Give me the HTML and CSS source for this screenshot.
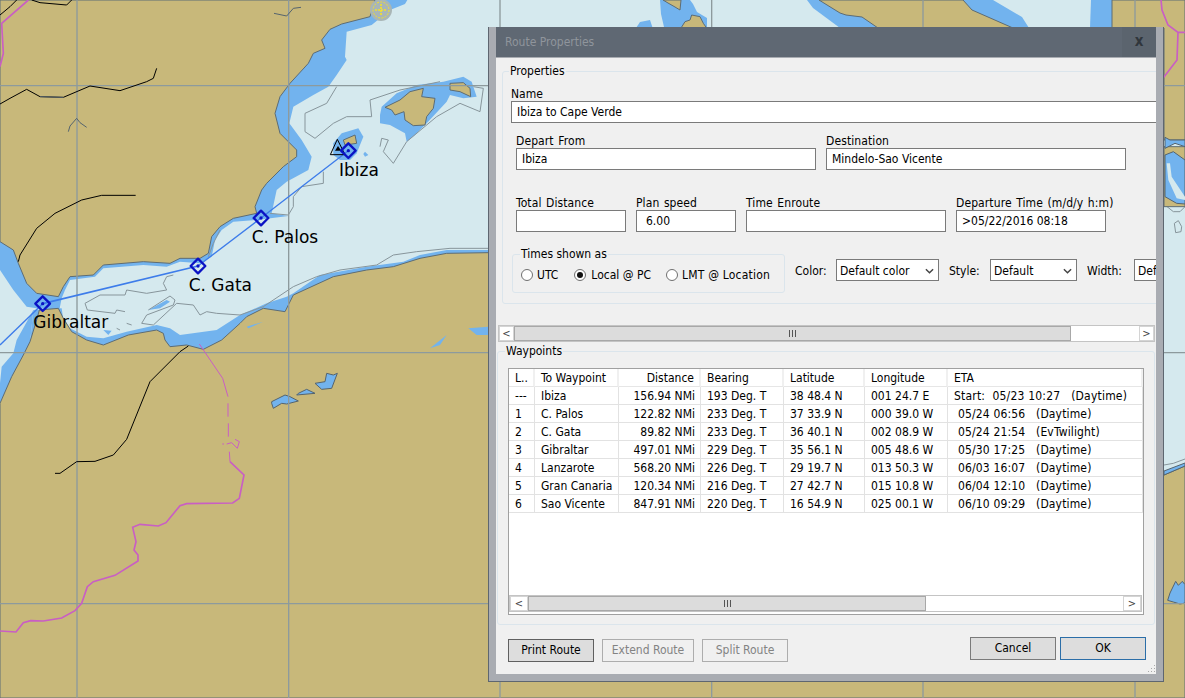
FILE: index.html
```html
<!DOCTYPE html>
<html lang="en">

<head>
    <meta charset="UTF-8">
    <title>Route Properties</title>
    <link rel="stylesheet" href="styles.css">
</head>

<body>
    <!-- chart, drawn in 3x units -->
    <svg class="chart" viewBox="0 0 3555 2094" width="1185" height="698">
        <rect class="water" x="0" y="0" width="3555" height="2094" />

        <!-- shallow bands -->
        <path class="shoal" d="M1222 0 L1215 12 L1170 30 L1115 75 L1040 95 L1035 170 L1040 180 L1010 225 L985 260 L940 285 L880 320 L868 370 L905 420 L935 470 L925 510 L860 545 L830 570 L815 640 L865 648 L770 660 L700 665 L665 690 L645 720 L635 770 L600 790 L540 785 L500 800 L430 795 L310 805 L285 830 L210 840 L195 870 L185 895 L178 930 L110 925 L80 920 L40 870 L0 810 L0 700 L300 0 Z" />
        <path class="shoal" d="M100 930 L185 925 L190 960 L210 985 L260 1010 L310 1015 L380 995 L470 975 L510 985 L540 1005 L650 990 L720 945 L800 910 L860 890 L880 880 L960 825 L1100 800 L1210 785 L1260 765 L1340 750 L1465 750 L1465 1100 L90 1100 L90 1030 Z" />
        <path class="shoal" d="M100 930 L50 1020 L40 1060 L5 1100 L0 1150 L0 1210 L90 1030 Z" />
        <path class="shoal" d="M1140 345 L1145 320 L1190 280 L1250 255 L1330 245 L1390 230 L1415 245 L1430 290 L1390 295 L1350 285 L1340 305 L1280 370 L1245 405 L1220 425 L1215 400 L1170 375 L1140 370 Z" />
        <path class="shoal" d="M1000 430 L1025 400 L1075 385 L1090 410 L1070 460 L1050 480 L1020 480 L1000 465 Z" />
        <path class="shoal" d="M1095 455 L1105 465 L1095 470 L1090 462 Z" />
        <path class="shoal" d="M1980 0 L1983 42 L1992 81 L1968 84 L2121 84 L2121 54 L2091 36 L2079 12 L2070 0 Z" />
        <path class="shoal" d="M1908 84 L1920 66 L1950 60 L1958 84 Z" />
        <path class="shoal" d="M2421 0 L2439 24 L2520 84 L2640 84 L2619 39 L2586 0 Z" />
        <path class="shoal" d="M2889 0 L2979 0 L3030 30 L3066 51 L3087 84 L2889 84 Z" />
        <path class="shoal" d="M3273 0 L3336 0 L3342 39 L3336 84 L3270 84 Z" />
        <path class="shoal" d="M445 930 L500 900 L510 905 L480 925 Z M310 990 L335 992 L325 1005 Z" />

        <!-- contours -->
        <path class="contour" d="M1010 260 L980 310 L915 340 L915 395 L945 415 L1000 370 L1040 350 L1115 350 L1110 300 L1200 270 L1320 245" />
        <path class="contour" d="M1420 260 L1450 265 L1440 335 L1380 310 L1310 350 L1220 425 L1180 490 L1150 455 L1165 420 L1145 415 L1140 440" />
        <path class="contour" d="M970 515 L970 550 L905 560 L880 590 L880 620 L865 645 L810 640" />
        <path class="contour" d="M1465 745 L1350 745 L1250 755 L1180 765 L1130 795 L1020 810 L950 830 L880 860 L790 920 L720 945 L650 940 L620 935 L600 945 L580 915 L530 910" />
        <path class="contour" d="M530 910 L460 975 L425 970 L440 945 L520 915 L525 900 L510 888 L445 930" />
        <path class="contour" d="M490 850 L500 830 L520 825 M490 850 L500 870 L440 880 L380 870 L375 885 L300 885 L255 910 L262 930 L345 940 L350 930 L375 935" />
        <path class="contour" d="M660 690 L640 730 L625 770 M350 985 L360 990 M380 970 L395 975" />
        <path class="contour" d="M3495 615 L3520 635 L3540 635 L3555 620" />
        <path class="contour" d="M3523 670 L3535 662 L3545 680 L3543 695 L3527 698 Z" />
        <path class="contour" d="M3492 1395 L3520 1390 L3555 1377" />

        <!-- land -->
        <path class="land" d="M0 0 L1125 0 L1110 50 L1025 72 L990 88 L965 120 L975 145 L940 160 L925 190 L870 250 L840 290 L825 340 L840 400 L890 450 L890 470 L850 500 L800 550 L785 570 L765 620 L770 640 L700 655 L660 680 L635 710 L625 760 L600 775 L540 775 L510 790 L430 785 L310 795 L280 825 L210 830 L190 860 L175 890 L110 880 L80 850 L55 790 L40 750 L0 725 Z" />
        <path class="land" d="M90 1025 L110 960 L118 930 L175 925 L190 955 L215 995 L260 1020 L310 1035 L385 1005 L470 990 L490 1000 L495 1020 L510 1040 L560 1035 L610 1048 L665 1020 L720 970 L740 950 L790 925 L855 935 L880 885 L1000 830 L1100 810 L1180 800 L1260 775 L1340 760 L1465 758 L3492 1425 L3555 1398 L3555 2094 L0 2094 L0 1210 L35 1130 L70 1065 Z" />
        <path class="land" d="M1155 322 L1200 300 L1230 275 L1270 265 L1265 290 L1305 295 L1300 325 L1280 350 L1275 375 L1240 377 L1215 360 L1212 335 L1185 345 L1175 330 Z" />
        <path class="land" d="M1350 250 L1390 248 L1410 265 L1412 290 L1380 275 L1350 270 Z" />
        <path class="land" d="M1030 420 L1065 405 L1070 430 L1035 435 Z" />
        <path class="land" d="M1989 0 L2043 0 L2040 30 L2025 21 L2004 9 Z" />
        <path class="land" d="M2043 84 L2055 65 L2070 60 L2075 45 L2100 50 L2110 70 L2120 84 Z" />
        <path class="land" d="M2457 0 L2520 39 L2538 45 L2586 51 L2634 84 L3039 84 L2916 30 L2889 0 Z" />
        <path class="land" d="M3336 0 L3555 0 L3555 420 L3492 420 L3492 84 L3336 84 Z" />
        <path class="land" d="M3492 440 L3555 440 L3555 620 L3492 620 Z" />

        <!-- right edge shoals and lakes -->
        <path class="shoal-edge" d="M3495 412 L3510 420 L3555 420 L3555 440 L3525 430 L3495 445 Z" />
        <path class="shoal-edge" d="M3495 465 L3520 455 L3555 480 L3555 612 L3530 610 L3495 590 Z" />
        <path class="light" d="M3500 490 L3510 490 L3515 530 L3555 590 L3555 600 L3530 595 L3505 540 Z" />
        <path class="shoal-edge" d="M3492 1413 L3555 1389 L3555 1398 L3492 1425 Z" />
        <path class="shoal-edge" d="M3503 1801 L3510 1779 L3527 1744 L3535 1756 L3547 1744 L3555 1754 L3555 1809 L3540 1812 L3520 1806 Z" />
        <path class="shoal" d="M740 980 L790 965 L745 985 Z M1405 985 L1465 980 L1465 1005 L1430 1005 Z M1290 1045 L1340 1005 L1320 1035 Z" />
        <path class="shoal-edge" d="M815 1210 L820 1225 L845 1210 L860 1212 L895 1203 L870 1190 L855 1185 L815 1205 Z" />
        <path class="shoal-edge" d="M890 1185 L945 1180 L920 1168 L895 1180 Z" />
        <path class="shoal-edge" d="M945 1150 L965 1168 L995 1165 L1012 1120 L1000 1125 L980 1120 L975 1145 Z" />

        <!-- grid -->
        <path class="grid" d="M231 0 V2094 M866 0 V2094 M1500 0 V2094 M2135 0 V2094 M2769 0 V2094 M3405 0 V2094 M0 257 H3555 M0 1058 H3555 M0 1811 H3555" />

        <!-- coast tracks -->
        <path class="track" d="M0 45 L30 20 L50 0 M95 0 L120 8 L200 15 L215 0" />
        <path class="track" d="M0 312 L30 295 L80 268 L120 290 L190 292 L270 258 L360 272 L440 245 L460 235 L470 205" />
        <path class="track" d="M407 586 L305 586 L245 600 L165 640 L110 685 L60 765 L55 785" />
        <path class="track" d="M165 1420 L180 1420 L230 1385 L285 1384 L340 1365 L380 1318 L450 1145 L540 1055 L565 1038" />
        <path class="stream" d="M822 40 L860 48 L880 25 L903 22 M205 395 L210 378 L230 355 L240 368 L260 382 M120 290 L190 292" />

        <!-- borders -->
        <path class="border" d="M85 0 L5 70 L10 160 L0 200" />
        <path class="border thin" d="M598 1032 L668 1135 L684 1190 M684 1210 V1250 M685 1270 V1310 M667 1332 H672 M680 1332 L695 1328 L712 1345 L718 1325 L705 1318 M688 1355 L690 1385" />
        <path class="border" d="M690 1385 L732 1425 L718 1495 L698 1509 L560 1511 L540 1517 L498 1568 L475 1578 L420 1573 L398 1582 L408 1625 L402 1650 L414 1665 L414 1683 L345 1726 L280 1745 L262 1760 L245 1810 L225 1832 L185 1854 L130 1863 L92 1862 L70 1868 L48 1896 L0 1893" />
        <path class="border" d="M3483 0 L3486 30 L3504 75 L3534 97 L3555 97 M3534 97 L3531 180 L3489 235" />

        <!-- lights -->
        <circle class="light-halo" cx="1143" cy="30" r="33" />
        <circle class="light-ring" cx="1143" cy="30" r="24" />
        <path class="light-cross" d="M1143 12 V48 M1125 30 H1161" />

        <!-- route -->
        <path class="route" d="M0 1035 L128 911" />
        <path class="route wide" d="M128 911 L594 798" />
        <path class="route" d="M594 798 L783 654 L1045 452" />

        <path class="beacon" d="M1012 418 L1035 464 L991 464 Z" />
        <path class="beacon-fill" d="M1014 438 L1024 452 L1005 452 Z" />

        <g class="wp">
            <path d="M128 889 L150 911 L128 933 L106 911 Z" />
            <circle cx="128" cy="911" r="5" />
            <path d="M594 776 L616 798 L594 820 L572 798 Z" />
            <circle cx="594" cy="798" r="5" />
            <path d="M783 632 L805 654 L783 676 L761 654 Z" />
            <circle cx="783" cy="654" r="5" />
            <path d="M1045 430 L1067 452 L1045 474 L1023 452 Z" />
            <circle cx="1045" cy="452" r="5" />
        </g>

        <text class="place" x="1017" y="527">Ibiza</text>
        <text class="place" x="755" y="728">C. Palos</text>
        <text class="place" x="566" y="873">C. Gata</text>
        <text class="place" x="100" y="985">Gibraltar</text>
    </svg>

    <div class="dialog">
        <div class="titlebar">
            <span class="title">Route Properties</span>
            <span class="close">x</span>
        </div>

        <div class="content">
            <div class="props">
                <fieldset class="group props-group">
                    <legend>Properties</legend>

                    <div class="label">Name</div>
                    <div class="box name-box">Ibiza to Cape Verde</div>

                    <div class="row row-places">
                        <div class="field w300">
                            <div class="label">Depart From</div>
                            <div class="box">Ibiza</div>
                        </div>
                        <div class="field w300">
                            <div class="label">Destination</div>
                            <div class="box">Mindelo-Sao Vicente</div>
                        </div>
                    </div>

                    <div class="row row-plan">
                        <div class="field w110">
                            <div class="label">Total Distance</div>
                            <div class="box"></div>
                        </div>
                        <div class="field w100">
                            <div class="label">Plan speed</div>
                            <div class="box speed">6.00</div>
                        </div>
                        <div class="field w200">
                            <div class="label">Time Enroute</div>
                            <div class="box"></div>
                        </div>
                        <div class="field w150">
                            <div class="label">Departure Time (m/d/y h:m)</div>
                            <div class="box">&gt;05/22/2016 08:18</div>
                        </div>
                    </div>

                    <div class="row-options">
                        <fieldset class="group times">
                            <legend>Times shown as</legend>
                            <div class="radios">
                                <span class="radio r-utc"><i class="dot"></i>UTC</span>
                                <span class="radio r-local"><i class="dot on"></i>Local @ PC</span>
                                <span class="radio r-lmt"><i class="dot"></i>LMT @ Location</span>
                            </div>
                        </fieldset>

                        <div class="selects">
                            <span class="sel-label color-label">Color:</span>
                            <div class="select w103">Default color<svg class="chev" viewBox="0 0 10 6"><path d="M1 1 L5 5 L9 1" /></svg></div>
                            <span class="sel-label style-label">Style:</span>
                            <div class="select w87">Default<svg class="chev" viewBox="0 0 10 6"><path d="M1 1 L5 5 L9 1" /></svg></div>
                            <span class="sel-label width-label">Width:</span>
                            <div class="select w87">Default</div>
                        </div>
                    </div>
                </fieldset>
            </div>

            <div class="hscroll top-scroll">
                <span class="arrow">&lt;</span>
                <span class="thumb thumb-top"><i class="grip"></i></span>
                <span class="track"></span>
                <span class="arrow">&gt;</span>
            </div>

            <fieldset class="group waypoints">
                <legend>Waypoints</legend>
                <div class="listbox">
                    <table class="wp-table">
                        <colgroup>
                            <col class="c-leg">
                            <col class="c-name">
                            <col class="c-dist">
                            <col class="c-bear">
                            <col class="c-lat">
                            <col class="c-lon">
                            <col class="c-eta">
                        </colgroup>
                        <thead>
                            <tr>
                                <th>L..</th>
                                <th>To Waypoint</th>
                                <th class="num">Distance</th>
                                <th>Bearing</th>
                                <th>Latitude</th>
                                <th>Longitude</th>
                                <th>ETA</th>
                            </tr>
                        </thead>
                        <tbody>
                            <tr><td>---</td><td>Ibiza</td><td class="num">156.94 NMi</td><td>193 Deg. T</td><td>38 48.4 N</td><td>001 24.7 E</td><td class="eta-first">Start:  05/23 10:27   (Daytime)</td></tr>
                            <tr><td>1</td><td>C. Palos</td><td class="num">122.82 NMi</td><td>233 Deg. T</td><td>37 33.9 N</td><td>000 39.0 W</td><td class="eta">05/24 06:56   (Daytime)</td></tr>
                            <tr><td>2</td><td>C. Gata</td><td class="num">89.82 NMi</td><td>233 Deg. T</td><td>36 40.1 N</td><td>002 08.9 W</td><td class="eta">05/24 21:54   (EvTwilight)</td></tr>
                            <tr><td>3</td><td>Gibraltar</td><td class="num">497.01 NMi</td><td>229 Deg. T</td><td>35 56.1 N</td><td>005 48.6 W</td><td class="eta">05/30 17:25   (Daytime)</td></tr>
                            <tr><td>4</td><td>Lanzarote</td><td class="num">568.20 NMi</td><td>226 Deg. T</td><td>29 19.7 N</td><td>013 50.3 W</td><td class="eta">06/03 16:07   (Daytime)</td></tr>
                            <tr><td>5</td><td>Gran Canaria</td><td class="num">120.34 NMi</td><td>216 Deg. T</td><td>27 42.7 N</td><td>015 10.8 W</td><td class="eta">06/04 12:10   (Daytime)</td></tr>
                            <tr><td>6</td><td>Sao Vicente</td><td class="num">847.91 NMi</td><td>220 Deg. T</td><td>16 54.9 N</td><td>025 00.1 W</td><td class="eta">06/10 09:29   (Daytime)</td></tr>
                        </tbody>
                    </table>

                    <div class="hscroll list-scroll">
                        <span class="arrow">&lt;</span>
                        <span class="thumb thumb-list"><i class="grip"></i></span>
                        <span class="track"></span>
                        <span class="arrow">&gt;</span>
                    </div>
                </div>
            </fieldset>

            <div class="footer">
                <div class="btn-left">
                    <span class="btn active w86">Print Route</span>
                    <span class="btn disabled w92">Extend Route</span>
                    <span class="btn disabled w86">Split Route</span>
                </div>
                <div class="btn-right">
                    <span class="btn normal w86">Cancel</span>
                    <span class="btn ok w86">OK</span>
                </div>
            </div>

            <svg class="resize-grip" viewBox="0 0 10 10" width="10" height="10">
                <path d="M8 1h1v1H8z M5 4h1v1H5z M8 4h1v1H8z M2 7h1v1H2z M5 7h1v1H5z M8 7h1v1H8z" />
            </svg>
        </div>
    </div>
</body>

</html>
```

FILE: styles.css
```css
* {
    box-sizing: border-box;
}

html,
body {
    margin: 0;
    height: 100%;
    overflow: hidden;
}

body {
    position: relative;
    background: #d5e9ee;
    font-family: "DejaVu Sans Condensed", "DejaVu Sans", sans-serif;
    font-size: 12px;
    color: #000;
}

/* chart */
.chart {
    position: absolute;
    left: 0;
    top: 0;
    display: block;
}

.water { fill: #d5e9ee; }
.light { fill: #d5e9ee; }
.shoal { fill: #72b3ee; }
.shoal-edge { fill: #72b3ee; stroke: #55646e; stroke-width: 3; }
.land { fill: #c8b87a; stroke: #5d6c74; stroke-width: 3; }
.contour { fill: none; stroke: #87959b; stroke-width: 3; stroke-linejoin: round; }
.grid { fill: none; stroke: #8d9a9d; stroke-width: 4; }
.track { fill: none; stroke: #000; stroke-width: 3; }
.stream { fill: none; stroke: #55646e; stroke-width: 3; }
.border { fill: none; stroke: #c95ec4; stroke-width: 5; }
.border.thin { stroke-width: 3; }
.light-halo { fill: #a9b6b6; }
.light-ring { fill: none; stroke: #f4e12c; stroke-width: 3; stroke-dasharray: 6 4; }
.light-cross { fill: none; stroke: #f4e12c; stroke-width: 5; stroke-dasharray: 6 3; }
.route { fill: none; stroke: #3d7cea; stroke-width: 4; }
.route.wide { stroke-width: 5; }
.beacon { fill: none; stroke: #000; stroke-width: 3; }
.beacon-fill { fill: #000; }
.wp path { fill: none; stroke: #0a12c4; stroke-width: 7; stroke-linejoin: round; }
.wp circle { fill: #0a12c4; }
.place { font-family: "DejaVu Sans", sans-serif; font-size: 51px; fill: #000; }

/* window */
.dialog {
    position: absolute;
    left: 488px;
    top: 27px;
    width: 676px;
    height: 655px;
    border: 1px solid #5e6670;
    border-top: 0;
    background: #a9acb2;
    padding: 0 7px 7px;
    display: flex;
    flex-direction: column;
}

.titlebar {
    height: 30px;
    flex: none;
    background: #5f6873;
    display: flex;
    align-items: center;
    justify-content: space-between;
    padding: 0 0 0 9px;
}

.title {
    color: #8f959c;
}

.close {
    width: 34px;
    height: 30px;
    line-height: 28px;
    text-align: center;
    font-weight: bold;
    font-size: 15px;
    color: #30363c;
    background: #5b646e;
}

.content {
    position: relative;
    flex: 1;
    margin-top: 1px;
    background: #f0f0f0;
    overflow: hidden;
}

.group {
    margin: 0;
    min-width: 0;
    border: 1px solid #dbe5ec;
    border-radius: 3px;
}

.group legend {
    padding: 0 1px;
    line-height: 15px;
}

.props {
    height: 267px;
    overflow: hidden;
}

.props-group {
    width: 700px;
    height: 240px;
    margin: 6px 0 0 6px;
    padding: 8px 0 0 8px;
}

.props-group > legend {
    margin-left: -2px;
}

.label {
    line-height: 14px;
    height: 14px;
}

.box {
    height: 22px;
    line-height: 20px;
    border: 1px solid #7a7a7a;
    background: #fff;
    padding: 0 5px;
    white-space: nowrap;
}

.name-box {
    width: 690px;
}

.row {
    display: flex;
    gap: 10px;
    margin-left: 5px;
}

.row-places { margin-top: 11px; }
.row-plan { margin-top: 26px; }

.w300 { width: 300px; }
.w200 { width: 200px; }
.w150 { width: 150px; }
.w110 { width: 110px; }
.w100 { width: 100px; }

.field .label {
    white-space: nowrap;
    word-spacing: 1px;
    letter-spacing: .1px;
}

.speed {
    padding-left: 9px;
}

.row-options {
    display: flex;
    margin: 15px 0 0 1px;
}

.times {
    flex: none;
    width: 273px;
    height: 46px;
    padding: 0 0 0 8px;
}

.times > legend {
    margin-left: -1px;
}

.radios {
    display: flex;
    height: 24px;
    align-items: center;
    margin-top: 1px;
    white-space: nowrap;
}

.radio {
    display: inline-flex;
    align-items: center;
    gap: 4px;
}

.r-utc { margin-right: 16px; }
.r-local { margin-right: 15px; gap: 5px; }
.r-lmt { letter-spacing: .2px; }

.dot {
    width: 12px;
    height: 12px;
    border: 1px solid #6f6f6f;
    border-radius: 50%;
    background: #fff;
    position: relative;
}

.dot.on::after {
    content: "";
    position: absolute;
    left: 2px;
    top: 2px;
    width: 6px;
    height: 6px;
    border-radius: 50%;
    background: #111;
}

.selects {
    display: flex;
    align-items: center;
    margin: 12px 0 0 10px;
    height: 22px;
    white-space: nowrap;
}

.sel-label { width: 41px; padding-top: 1px; }
.style-label { margin-left: 10px; }
.width-label { margin-left: 10px; width: 47px; }

.select {
    height: 22px;
    line-height: 20px;
    border: 1px solid #7a7a7a;
    background: #fff;
    padding: 1px 3px 0;
    display: flex;
    align-items: center;
    justify-content: space-between;
}

.w103 { width: 103px; }
.w87 { width: 87px; }

.chev {
    width: 9px;
    height: 6px;
    margin-right: 1px;
}

.chev path {
    fill: none;
    stroke: #444;
    stroke-width: 1.6;
}

/* scrollbars */
.hscroll {
    display: flex;
    height: 17px;
    background: #fff;
    border: 1px solid #c4c4c4;
}

.top-scroll {
    margin: 0 1px 0 2px;
}

.arrow {
    flex: none;
    width: 15px;
    text-align: center;
    line-height: 14px;
    font-size: 11px;
    color: #444;
    background: #fff;
    border: 1px solid #d4d4d4;
}

.thumb {
    flex: none;
    display: flex;
    align-items: center;
    justify-content: center;
    background: #dcdcdc;
    border: 1px solid #a8a8a8;
}

.thumb-top { width: 557px; }
.thumb-list { width: 398px; }

.track {
    flex: 1;
    background: #fff;
}

.grip {
    width: 7px;
    height: 7px;
    border-left: 1px solid #555;
    border-right: 1px solid #555;
    background: linear-gradient(#555, #555) center / 1px 100% no-repeat;
}

/* waypoints */
.waypoints {
    width: 658px;
    height: 281px;
    margin: 2px 0 0 1px;
    padding: 9px 10px 0 10px;
}

.waypoints > legend {
    margin-left: -3px;
}

.listbox {
    height: 247px;
    width: 636px;
    border: 1px solid #a0a0a0;
    background: #fff;
    display: flex;
    flex-direction: column;
    justify-content: space-between;
}

.wp-table {
    width: 634px;
    table-layout: fixed;
    border-collapse: separate;
    border-spacing: 0;
}

.c-leg { width: 26px; }
.c-name { width: 84px; }
.c-dist { width: 82px; }
.c-bear { width: 83px; }
.c-lat { width: 81px; }
.c-lon { width: 83px; }

.wp-table th,
.wp-table td {
    height: 18px;
    text-align: left;
    font-weight: normal;
    white-space: pre;
    overflow: hidden;
    line-height: 15px;
}

.wp-table th {
    padding: 1px 5px 0 6px;
    border-right: 2px solid #f0f0f0;
    border-bottom: 1px solid #e6e6e6;
}

.wp-table td {
    padding: 2px 5px 0 6px;
    border-right: 1px solid #e2e2e2;
    border-bottom: 1px solid #e2e2e2;
}

.wp-table th.num,
.wp-table td.num {
    text-align: right;
}

.wp-table td.eta {
    padding-left: 10px;
    letter-spacing: .15px;
}

.wp-table td.eta-first {
    letter-spacing: .2px;
}

.list-scroll {
    margin: 0 1px 2px 0;
}

.list-scroll .arrow { width: 18px; }

/* buttons */
.footer {
    flex: 1;
    display: flex;
    justify-content: space-between;
    align-items: flex-start;
    padding: 12px 10px 0 12px;
}

.btn-left {
    display: flex;
    gap: 8px;
    margin-top: 2px;
}

.btn-right {
    display: flex;
    gap: 4px;
}

.btn {
    display: block;
    height: 23px;
    line-height: 21px;
    text-align: center;
    border: 1px solid #7a7a7a;
    background: #dddddd;
    white-space: nowrap;
}

.w86 { width: 86px; }
.w92 { width: 92px; }

.btn.active { border-color: #606060; }
.btn.disabled { color: #838383; background: #f0f0f0; border-color: #adadad; }
.btn.ok { border-color: #2b6ea8; }

.resize-grip {
    position: absolute;
    right: 0;
    bottom: 0;
    fill: #a8a8a8;
}
```
